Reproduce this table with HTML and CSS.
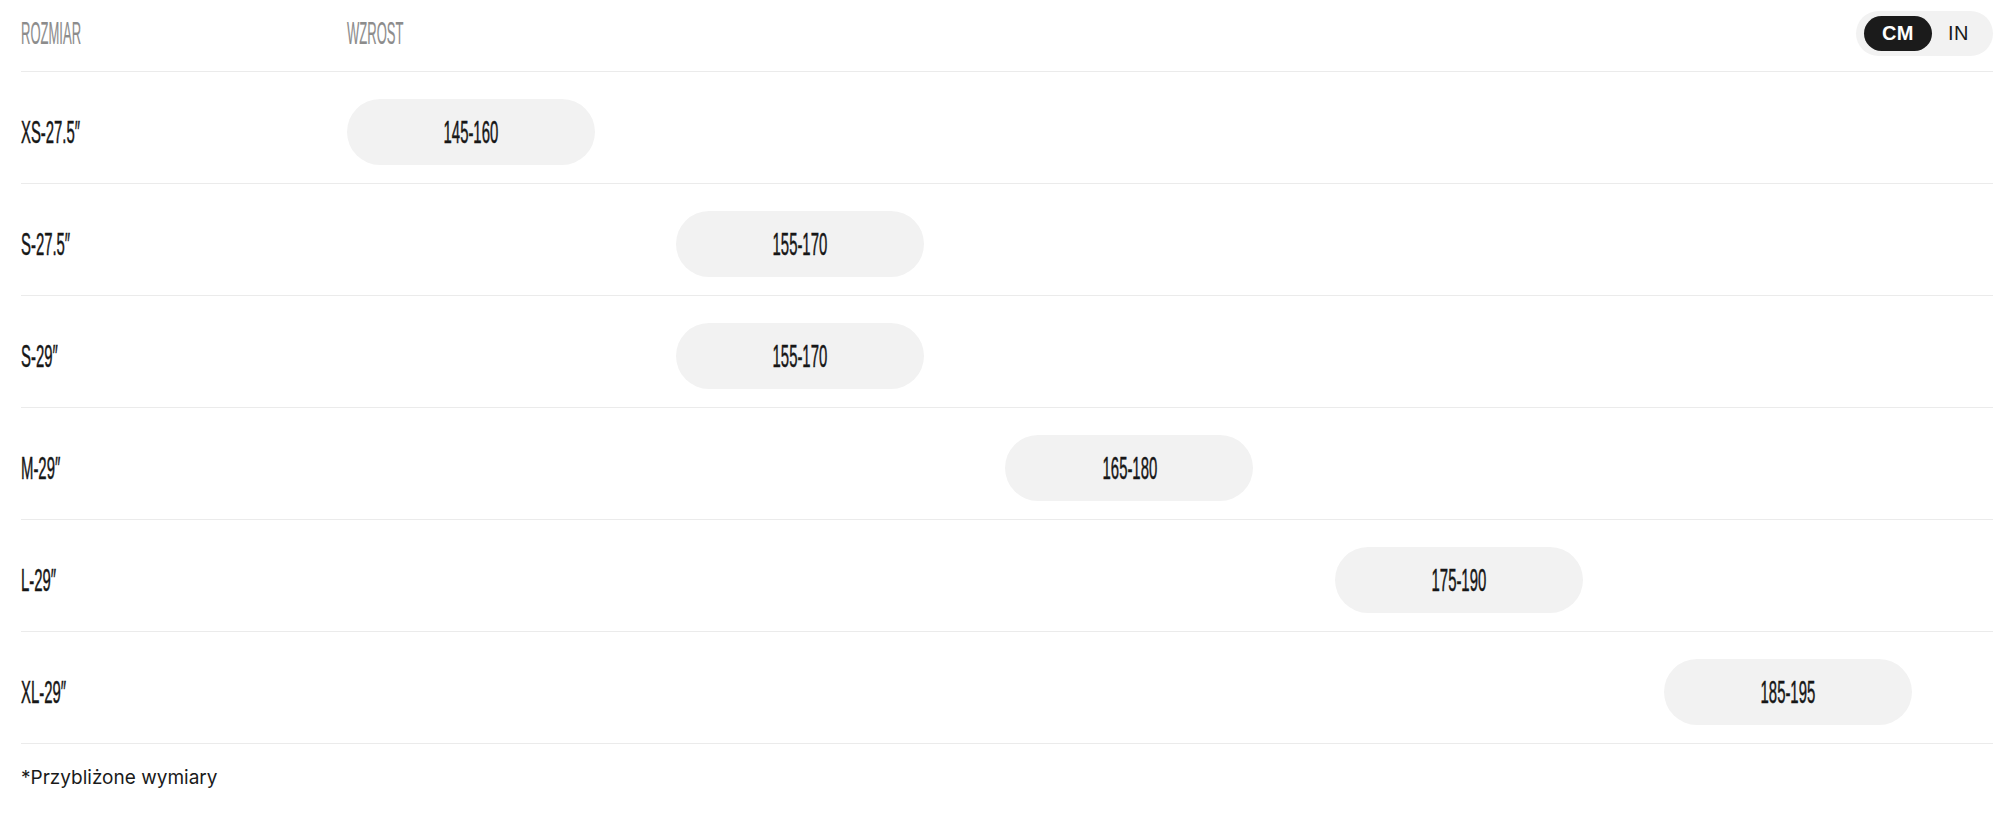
FILE: index.html
```html
<!DOCTYPE html>
<html lang="pl">
<head>
<meta charset="utf-8">
<title>Tabela rozmiarów</title>
<link rel="stylesheet" href="styles.css">
</head>
<body>
<div class="page">
  <div class="table">
    <div class="head">
      <div class="hcell"><span class="cond hdr">ROZMIAR</span></div>
      <div class="hcell"><span class="cond hdr">WZROST</span></div>
      <div class="toggle">
        <span class="tbtn active">CM</span>
        <span class="tbtn">IN</span>
      </div>
    </div>
    <div class="row">
      <div class="label"><span class="cond">XS-27.5″</span></div>
      <div class="cell"><div class="pill"><span class="cond">145-160</span></div></div>
      <div class="cell"></div><div class="cell"></div><div class="cell"></div><div class="cell"></div>
    </div>
    <div class="row">
      <div class="label"><span class="cond">S-27.5″</span></div>
      <div class="cell"></div>
      <div class="cell"><div class="pill"><span class="cond">155-170</span></div></div>
      <div class="cell"></div><div class="cell"></div><div class="cell"></div>
    </div>
    <div class="row">
      <div class="label"><span class="cond">S-29″</span></div>
      <div class="cell"></div>
      <div class="cell"><div class="pill"><span class="cond">155-170</span></div></div>
      <div class="cell"></div><div class="cell"></div><div class="cell"></div>
    </div>
    <div class="row">
      <div class="label"><span class="cond">M-29″</span></div>
      <div class="cell"></div><div class="cell"></div>
      <div class="cell"><div class="pill"><span class="cond">165-180</span></div></div>
      <div class="cell"></div><div class="cell"></div>
    </div>
    <div class="row">
      <div class="label"><span class="cond">L-29″</span></div>
      <div class="cell"></div><div class="cell"></div><div class="cell"></div>
      <div class="cell"><div class="pill"><span class="cond">175-190</span></div></div>
      <div class="cell"></div>
    </div>
    <div class="row">
      <div class="label"><span class="cond">XL-29″</span></div>
      <div class="cell"></div><div class="cell"></div><div class="cell"></div><div class="cell"></div>
      <div class="cell"><div class="pill"><span class="cond">185-195</span></div></div>
    </div>
  </div>
  <p class="note">*Przybliżone wymiary</p>
</div>
</body>
</html>
```

FILE: styles.css
```css
html, body {
  margin: 0;
  padding: 0;
  background: #ffffff;
}

.page {
  padding: 0 17px 0 21px;
  font-family: "Liberation Sans", Arial, sans-serif;
  color: #1a1a1a;
}

.table {
  display: flex;
  flex-direction: column;
}

.head {
  display: grid;
  grid-template-columns: 326px 1fr auto;
  align-items: center;
  padding: 11px 0 15px;
  border-bottom: 1px solid #ebebeb;
}

.hcell {
  height: 45px;
  display: flex;
  align-items: center;
}

.cond {
  display: inline-block;
  font-family: "Liberation Sans", Arial, sans-serif;
  font-weight: 400;
  font-size: 31px;
  line-height: 1;
  transform: scaleX(0.48);
  transform-origin: left center;
  white-space: nowrap;
  color: #161616;
  -webkit-text-stroke: 0.5px #161616;
}

.hdr {
  color: #8c8c8c;
  -webkit-text-stroke: 0.2px #8c8c8c;
  transform: scaleX(0.42);
}

.toggle {
  display: flex;
  align-items: center;
  height: 45px;
  box-sizing: border-box;
  padding: 5px 8px;
  border-radius: 23px;
  background: #f2f2f2;
}

.tbtn {
  display: flex;
  align-items: center;
  justify-content: center;
  height: 35px;
  padding: 0 16px;
  border-radius: 18px;
  font-family: "Liberation Sans", Arial, sans-serif;
  font-size: 20px;
  letter-spacing: 0.5px;
  color: #1a1a1a;
}

.tbtn.active {
  background: #1b1b1b;
  color: #ffffff;
  font-weight: 700;
  padding: 0 18px;
}

.row {
  display: grid;
  grid-template-columns: 326px repeat(5, 1fr);
  align-items: center;
  padding: 27px 0 18px;
  border-bottom: 1px solid #ebebeb;
}

.label {
  height: 66px;
  display: flex;
  align-items: center;
}

.cell {
  height: 66px;
}

.pill {
  width: 248px;
  height: 66px;
  border-radius: 33px;
  background: #f2f2f2;
  display: flex;
  align-items: center;
  justify-content: center;
}

.pill .cond {
  transform-origin: center center;
}

.note {
  margin: 0;
  padding-top: 20px;
  font-family: Inter, "Liberation Sans", sans-serif;
  font-size: 19px;
  line-height: 27px;
  color: #1a1a1a;
}
```
